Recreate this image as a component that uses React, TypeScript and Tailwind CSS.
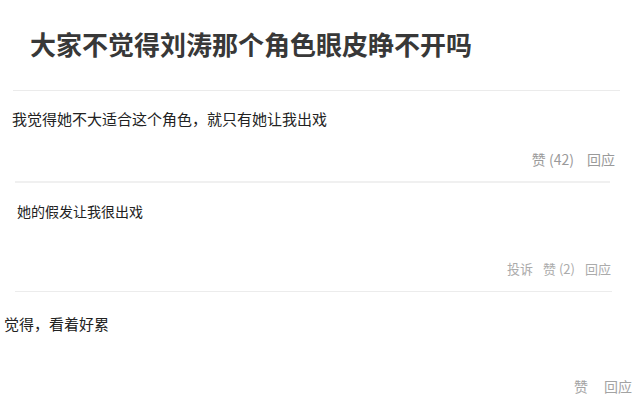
export default function App() {
  const font = { fontFamily: '"Noto Sans CJK SC", "Noto Sans", sans-serif' };

  return (
    <div className="w-[640px] h-[406px] overflow-hidden bg-white flex flex-col" style={font}>
      {/* 标题 */}
      <div className="pt-[26px] pl-[30px] h-[90px]">
        <h1 className="text-[26px] leading-[36px] font-bold text-[#383838]">大家不觉得刘涛那个角色眼皮睁不开吗</h1>
      </div>
      <div className="ml-[13px] w-[607px] h-px bg-[#ebebeb]" />

      {/* 回复 1 */}
      <div className="pl-[12px] pt-[17px] text-[15px] leading-[22px] text-[#222]">
        我觉得她不大适合这个角色，就只有她让我出戏
      </div>
      <div className="flex justify-end pr-[25px] pt-[19px] text-[14px] leading-[20px] text-[#9a9a9a]">
        <span>赞 (42)</span>
        <span className="ml-[13px]">回应</span>
      </div>
      <div className="mt-[12px] ml-[15px] w-[595px] h-[2px] bg-[#f0f0f0]" />

      {/* 回复 2 */}
      <div className="pl-[17px] pt-[18px] text-[14px] leading-[20px] text-[#222]">
        她的假发让我很出戏
      </div>
      <div className="flex justify-end pr-[29px] pt-[38px] text-[13px] leading-[20px] text-[#ababab]">
        <span>投诉</span>
        <span className="ml-[10px]">赞 (2)</span>
        <span className="ml-[10px]">回应</span>
      </div>
      <div className="mt-[12px] ml-[15px] w-[597px] h-px bg-[#ececec]" />

      {/* 回复 3 */}
      <div className="pl-[4px] pt-[21px] text-[15px] leading-[22px] text-[#222]">
        觉得，看着好累
      </div>
      <div className="flex justify-end pr-[8px] pt-[41px] text-[14px] leading-[20px] text-[#a3a3a3]">
        <span>赞</span>
        <span className="ml-[16px]">回应</span>
      </div>
    </div>
  );
}
